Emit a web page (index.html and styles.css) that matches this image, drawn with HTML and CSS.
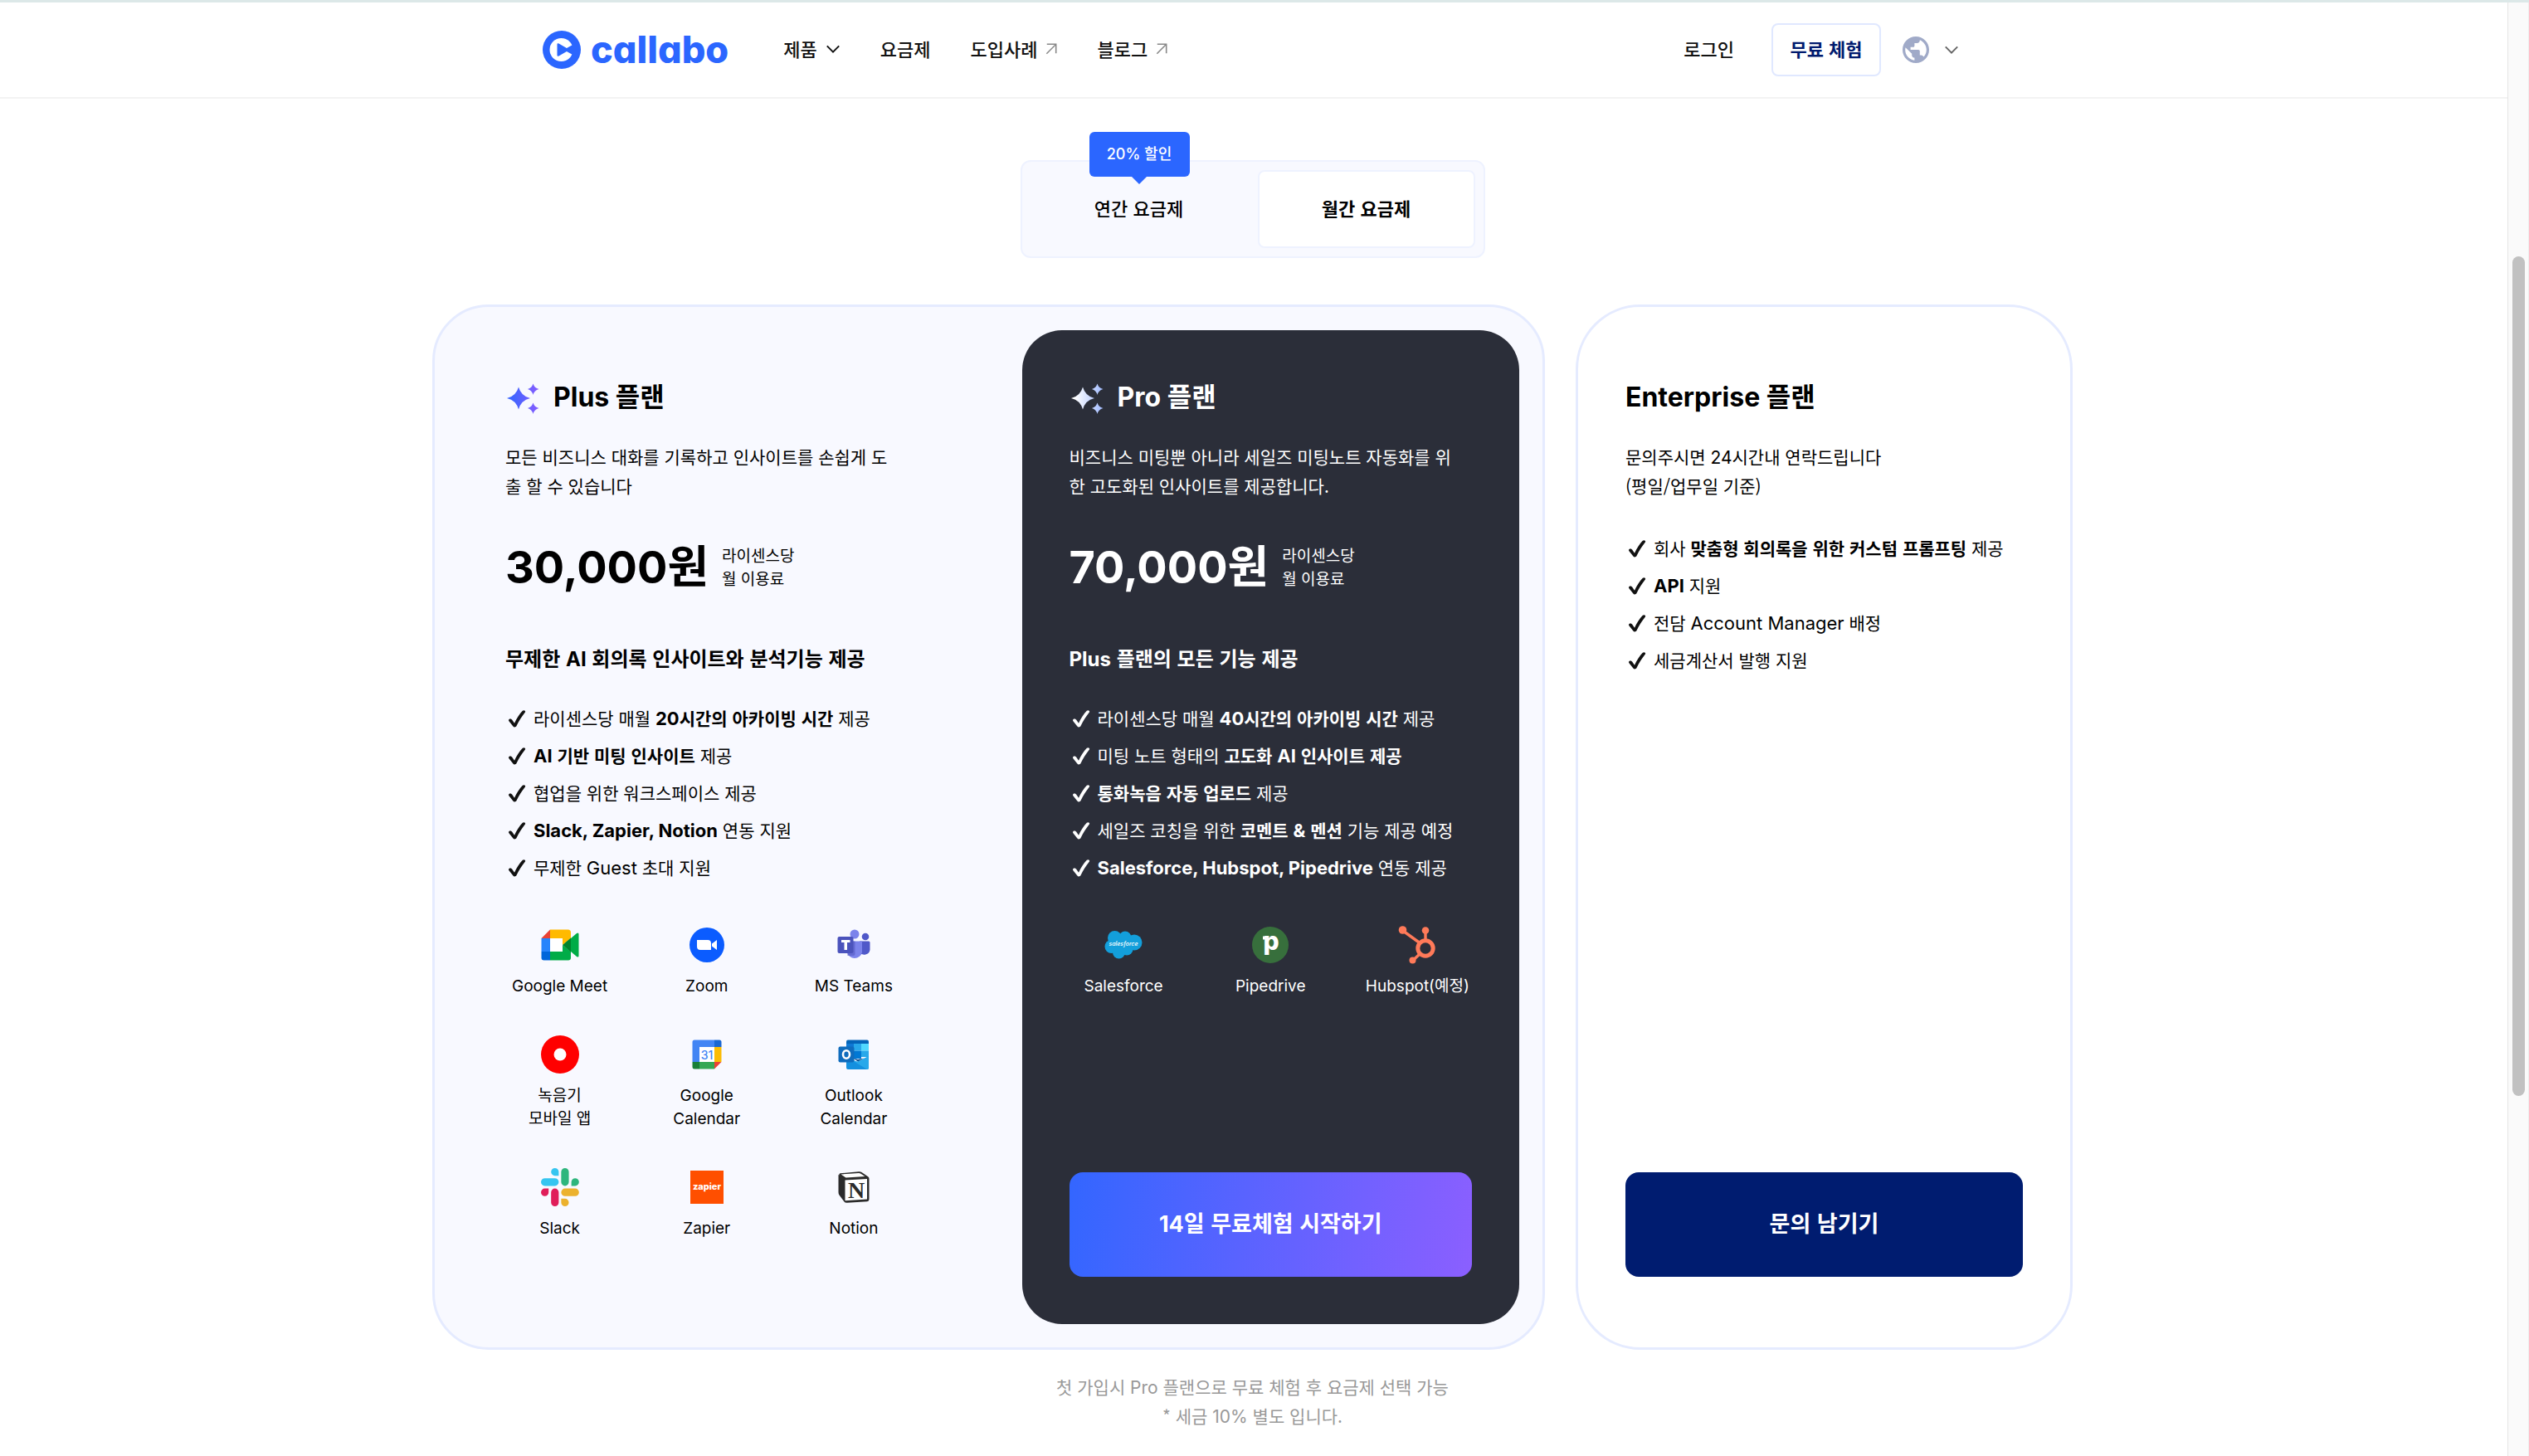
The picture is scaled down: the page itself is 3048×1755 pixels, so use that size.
FILE: index.html
```html
<!DOCTYPE html>
<html lang="ko">
<head>
<meta charset="utf-8">
<meta name="viewport" content="width=device-width, initial-scale=1">
<title>callabo 요금제</title>
<link rel="stylesheet" href="styles.css">
</head>
<body>
<svg class="defs" aria-hidden="true">
  <defs>
    <linearGradient id="spark-light" gradientUnits="userSpaceOnUse" x1="2" y1="0" x2="42" y2="0"><stop offset="0.1" stop-color="#ffffff"/><stop offset="1" stop-color="#9db8ff"/></linearGradient>
    <linearGradient id="spark-main" gradientUnits="userSpaceOnUse" x1="2" y1="0" x2="42" y2="0"><stop offset="0.1" stop-color="#3a66ff"/><stop offset="1" stop-color="#8a5cff"/></linearGradient>
    <symbol id="sparkle" viewBox="0 0 46 46">
      <path d="M16 10.500Q19 21.500 30 24Q19 26.500 16 37.500Q13 26.500 2 24Q13 21.500 16 10.500Z"/>
      <path d="M33.500 6.500Q35 11.500 40.500 13Q35 14.500 33.500 20Q32 14.500 27 13Q32 11.500 33.500 6.500Z"/>
      <path d="M33.500 29.500Q35 34.500 40.500 36Q35 37.500 33.500 43Q32 37.500 27 36Q32 34.500 33.500 29.500Z"/>
    </symbol>
    <symbol id="check" viewBox="0 0 28 28">
      <path d="M4 16.200C4 14.200 7 13.800 8.100 15.600L11 19.800C13.500 14.200 17.300 8.500 20.800 4.800C22.300 3.500 25 4.500 23.900 6.600C19.800 11.800 16.200 17.300 13.500 23C12.600 24.800 10.200 25 9.200 23.300L4.600 17.500Q4 16.800 4 16.200Z" fill="currentColor"/>
    </symbol>
    <symbol id="chevron" viewBox="0 0 20 12"><path d="M2 2L10 10L18 2" fill="none" stroke="currentColor" stroke-width="2.200"/></symbol>
    <symbol id="arrow" viewBox="0 0 16 16"><path d="M2 1.500H14.500V14M14.500 1.500L1.500 14.500" fill="none" stroke="currentColor" stroke-width="1.800"/></symbol>
  </defs>
</svg>
<div class="window">
  <div class="page">
    <header class="site-header">
      <div class="header-inner">
        <a class="logo" href="#" aria-label="callabo">
          <svg class="logo-mark" viewBox="0 0 46 46" aria-hidden="true">
            <circle cx="23" cy="23" r="23" fill="#2b66ff"/>
            <circle cx="22.500" cy="23" r="14" fill="#fff"/>
            <path d="M17.500 16.500Q17.500 14.500 19.500 15.500L29 21L38 16V30L29 25L19.500 30.500Q17.500 31.500 17.500 29.500Z" fill="#2b66ff"/>
          </svg>
          <span class="logo-text">callabo</span>
        </a>
        <nav class="nav">
          <a href="#">제품 <svg class="chevron" aria-hidden="true"><use href="#chevron"/></svg></a>
          <a href="#">요금제</a>
          <a href="#">도입사례 <svg class="arrow" aria-hidden="true"><use href="#arrow"/></svg></a>
          <a href="#">블로그 <svg class="arrow" aria-hidden="true"><use href="#arrow"/></svg></a>
        </nav>
        <div class="account">
          <a class="login" href="#">로그인</a>
          <button class="trial" type="button">무료 체험</button>
          <button class="language" type="button" aria-label="언어">
            <svg class="globe" viewBox="2 2 20 20" aria-hidden="true"><path fill="#a0aac8" d="M12 2C6.480 2 2 6.480 2 12s4.480 10 10 10 10-4.480 10-10S17.520 2 12 2zm-1 17.930c-3.950-.49-7-3.850-7-7.930 0-.62.080-1.210.210-1.790L9 15v1c0 1.100.900 2 2 2v1.930zm6.900-2.540c-.26-.81-1-1.390-1.900-1.390h-1v-3c0-.55-.45-1-1-1H8v-2h2c.55 0 1-.45 1-1V7h2c1.100 0 2-.9 2-2v-.41c2.930 1.190 5 4.060 5 7.410 0 2.080-.8 3.970-2.100 5.390z"/></svg>
            <svg class="chevron muted" aria-hidden="true"><use href="#chevron"/></svg>
          </button>
        </div>
      </div>
    </header>

    <main class="pricing">
      <div class="billing">
        <button class="billing-tab" type="button">연간 요금제<span class="badge">20% 할인</span></button>
        <button class="billing-tab active" type="button">월간 요금제</button>
      </div>

      <div class="plans">
        <div class="plan-group">
          <section class="plan plus">
            <h2><svg class="spark" fill="url(#spark-main)" aria-hidden="true"><use href="#sparkle"/></svg>Plus 플랜</h2>
            <p class="desc">모든 비즈니스 대화를 기록하고 인사이트를 손쉽게 도<br>출 할 수 있습니다</p>
            <div class="price"><span class="amount">30,000원</span><span class="unit">라이센스당<br>월 이용료</span></div>
            <h3>무제한 <span class="latin">AI</span> 회의록 인사이트와 분석기능 제공</h3>
            <ul class="features">
              <li><svg class="check" aria-hidden="true"><use href="#check"/></svg><span>라이센스당 매월 <strong><span class="latin">20</span>시간의 아카이빙 시간</strong> 제공</span></li>
              <li><svg class="check" aria-hidden="true"><use href="#check"/></svg><span><strong><span class="latin">AI</span> 기반 미팅 인사이트</strong> 제공</span></li>
              <li><svg class="check" aria-hidden="true"><use href="#check"/></svg><span>협업을 위한 워크스페이스 제공</span></li>
              <li><svg class="check" aria-hidden="true"><use href="#check"/></svg><span><strong class="latin">Slack, Zapier, Notion</strong> 연동 지원</span></li>
              <li><svg class="check" aria-hidden="true"><use href="#check"/></svg><span>무제한 <span class="latin">Guest</span> 초대 지원</span></li>
            </ul>
            <ul class="apps">
              <li>
                <svg viewBox="0 0 46 46" aria-hidden="true">
                  <path d="M0.500 15L11 4.500V15Z" fill="#ea4335"/>
                  <path d="M11 4.500H32.500Q36 4.500 36 8V15L26 23V15H11Z" fill="#ffba00"/>
                  <path d="M0.500 15H11V31H0.500Z" fill="#2684fc"/>
                  <path d="M0.500 31H11V41.500H3.500Q0.500 41.500 0.500 38.500Z" fill="#0066da"/>
                  <path d="M11 31H26V23L36 31V38.500Q36 41.500 33 41.500H11Z" fill="#00ac47"/>
                  <path d="M11 15H26V31H11Z" fill="#fff"/>
                  <path d="M36 15L43 9Q45.500 7.500 45.500 10V36Q45.500 38.500 43 37L36 31Z" fill="#00ac47"/>
                  <path d="M26 23L36 14.500V31.500Z" fill="#00832d"/>
                </svg>Google Meet
              </li>
              <li>
                <svg viewBox="0 0 46 46" aria-hidden="true">
                  <circle cx="23" cy="23" r="21" fill="#0b5cff"/>
                  <path d="M11 17H24Q28 17 28 21V29H15Q11 29 11 25ZM29 21.500L35 17V29L29 24.500Z" fill="#fff"/>
                </svg>Zoom
              </li>
              <li>
                <svg viewBox="0 0 46 46" aria-hidden="true">
                  <circle cx="24" cy="10" r="5.500" fill="#7b83eb"/><circle cx="37" cy="13" r="4.300" fill="#5059c9"/>
                  <path d="M30 18.500H41Q42.500 18.500 42.500 20V29A7 7 0 0 1 30 32Z" fill="#5059c9"/>
                  <path d="M15 18.500H33V32A9.300 9.300 0 0 1 15 32Z" fill="#7b83eb"/>
                  <path d="M15 18.500H24.500V34Q24.500 36 22 36H15.500Z" fill="#5b60c8" opacity="0.700"/>
                  <rect x="3.500" y="13" width="19" height="20" rx="2" fill="#4b53bc"/>
                  <path d="M8 17H18.500V20H15V29H11.500V20H8Z" fill="#fff"/>
                </svg>MS Teams
              </li>
              <li>
                <svg viewBox="0 0 46 46" aria-hidden="true"><circle cx="23" cy="23" r="23" fill="#f00"/><circle cx="23" cy="23" r="7.500" fill="#fff"/></svg>녹음기<br>모바일 앱
              </li>
              <li>
                <svg viewBox="0 0 46 46" aria-hidden="true">
                  <path d="M5.500 8Q5.500 5.500 8 5.500H32V14H14V32H5.500Z" fill="#4285f4"/>
                  <path d="M32 5.500H38Q40.500 5.500 40.500 8V14H32Z" fill="#1967d2"/>
                  <path d="M32 14H40.500V32H32Z" fill="#fbbc04"/>
                  <path d="M14 32H32V40.500H14Z" fill="#34a853"/>
                  <path d="M5.500 32H14V40.500H8Q5.500 40.500 5.500 38Z" fill="#188038"/>
                  <path d="M32 32H40.500L32 40.500Z" fill="#ea4335"/>
                  <path d="M14 14H32V32H14Z" fill="#fff"/>
                  <text x="23" y="28.500" class="glyph cal">31</text>
                </svg>Google<br>Calendar
              </li>
              <li>
                <svg viewBox="0 0 46 46" aria-hidden="true">
                  <path d="M14 7.500Q14 5.500 16 5.500H39Q41 5.500 41 7.500V10H14Z" fill="#0364b8"/>
                  <path d="M14 10H23V18.500H14Z" fill="#0f78d4"/><path d="M23 10H32V18.500H23Z" fill="#28a8ea"/><path d="M32 10H41V18.500H32Z" fill="#50d9ff"/>
                  <path d="M14 18.500H23V28H14Z" fill="#0364b8"/><path d="M23 18.500H32V28H23Z" fill="#0078d4"/><path d="M32 18.500H41V26H32Z" fill="#28a8ea"/>
                  <path d="M14 24L27.500 33L41 25V39Q41 41 39 41H16Q14 41 14 39Z" fill="#1490df"/>
                  <path d="M41 25V39Q41 41 39 41L21 30L27.500 31.500Z" fill="#28a8ea"/>
                  <path d="M22 27.500L28 31.500L35 27.500L28 29Z" fill="#0a4f91"/>
                  <rect x="4.500" y="13.500" width="19" height="19" rx="2" fill="#0f6cbd"/>
                  <ellipse cx="14" cy="23" rx="4" ry="4.700" fill="none" stroke="#fff" stroke-width="2.600"/>
                </svg>Outlook<br>Calendar
              </li>
              <li>
                <svg viewBox="0 0 54 54" aria-hidden="true">
                  <path d="M19.700 0a5.400 5.400 0 0 0 0 10.800h5.400V5.400A5.400 5.400 0 0 0 19.700 0m0 14.400H5.400a5.400 5.400 0 0 0 0 10.800h14.300a5.400 5.400 0 0 0 0-10.800" fill="#36c5f0"/>
                  <path d="M53.800 19.800a5.400 5.400 0 0 0-10.800 0v5.400h5.400a5.400 5.400 0 0 0 5.400-5.400m-14.400 0V5.400a5.400 5.400 0 0 0-10.800 0v14.400a5.400 5.400 0 0 0 10.800 0" fill="#2eb67d"/>
                  <path d="M34 54a5.400 5.400 0 0 0 0-10.800h-5.400v5.400A5.400 5.400 0 0 0 34 54m0-14.400h14.400a5.400 5.400 0 0 0 0-10.800H34a5.400 5.400 0 0 0 0 10.800" fill="#ecb22e"/>
                  <path d="M0 34.200a5.400 5.400 0 0 0 10.800 0v-5.400H5.400A5.400 5.400 0 0 0 0 34.200m14.300 0v14.400a5.400 5.400 0 0 0 10.800 0V34.200a5.400 5.400 0 0 0-10.800 0" fill="#e01e5a"/>
                </svg>Slack
              </li>
              <li>
                <svg viewBox="0 0 46 46" aria-hidden="true"><rect x="3" y="3" width="40" height="40" fill="#ff4f00"/><text x="23" y="26" class="glyph zap">zapier</text></svg>Zapier
              </li>
              <li>
                <svg viewBox="0 0 46 46" aria-hidden="true">
                  <path d="M6 8.500Q4.500 7.500 6.500 6.200L29 4.200Q31 4 32.500 5L40.500 10.500Q41.500 11.200 41.500 13V37.500Q41.500 40 39 40.200L15 41.800Q12.500 42 11.500 40.500L5.500 32.500Q4.500 31 4.500 29V8Z" fill="#2b2b2b"/>
                  <path d="M7.500 7.500L29 6Q30.500 6 31.500 6.700L36.500 10L13.500 11.500Z" fill="#fff"/>
                  <path d="M12.500 14.500L39 13V37.500L12.500 39.300Z" fill="#fff"/>
                  <text x="26" y="35.500" class="glyph notion">N</text>
                </svg>Notion
              </li>
            </ul>
          </section>

          <section class="plan pro">
            <h2><svg class="spark" fill="url(#spark-light)" aria-hidden="true"><use href="#sparkle"/></svg>Pro 플랜</h2>
            <p class="desc">비즈니스 미팅뿐 아니라 세일즈 미팅노트 자동화를 위<br>한 고도화된 인사이트를 제공합니다.</p>
            <div class="price"><span class="amount">70,000원</span><span class="unit">라이센스당<br>월 이용료</span></div>
            <h3><span class="latin">Plus</span> 플랜의 모든 기능 제공</h3>
            <ul class="features">
              <li><svg class="check" aria-hidden="true"><use href="#check"/></svg><span>라이센스당 매월 <strong><span class="latin">40</span>시간의 아카이빙 시간</strong> 제공</span></li>
              <li><svg class="check" aria-hidden="true"><use href="#check"/></svg><span>미팅 노트 형태의 <strong>고도화 <span class="latin">AI</span> 인사이트 제공</strong></span></li>
              <li><svg class="check" aria-hidden="true"><use href="#check"/></svg><span><strong>통화녹음 자동 업로드</strong> 제공</span></li>
              <li><svg class="check" aria-hidden="true"><use href="#check"/></svg><span>세일즈 코칭을 위한 <strong>코멘트 <span class="latin">&amp;</span> 멘션</strong> 기능 제공 예정</span></li>
              <li><svg class="check" aria-hidden="true"><use href="#check"/></svg><span><strong class="latin">Salesforce, Hubspot, Pipedrive</strong> 연동 제공</span></li>
            </ul>
            <ul class="apps">
              <li>
                <svg viewBox="0 0 46 46" aria-hidden="true">
                  <g fill="#139fdb"><circle cx="12.500" cy="14.500" r="8.500"/><circle cx="25" cy="14" r="7.500"/><circle cx="36" cy="20" r="9.500"/><circle cx="8.500" cy="25" r="8"/><circle cx="17.500" cy="32" r="7.500"/><circle cx="27" cy="28" r="7.500"/><path d="M10 14H36V28H10Z"/></g>
                  <text x="23" y="23.500" class="glyph sales">salesforce</text>
                </svg>Salesforce
              </li>
              <li>
                <svg viewBox="0 0 46 46" aria-hidden="true"><circle cx="23" cy="23" r="22" fill="#376f3c"/><path d="M14 12.500H20V16.500H14Z" fill="#fff"/><text x="24" y="29" class="glyph pipe">p</text></svg>Pipedrive
              </li>
              <li>
                <svg viewBox="0 0 46 46" aria-hidden="true">
                  <g fill="none" stroke="#ff7a59"><circle cx="33" cy="27" r="9.200" stroke-width="5"/><path d="M33 6V17M6 6L26 20.500M18 41.500L26 34" stroke-width="3.400"/></g>
                  <g fill="#ff7a59"><circle cx="33" cy="5.500" r="4.300"/><circle cx="5.500" cy="5" r="4.800"/><circle cx="17.500" cy="41.500" r="4"/></g>
                </svg><span class="nowrap">Hubspot(예정)</span>
              </li>
            </ul>
            <button class="cta gradient" type="button"><span class="latin">14</span>일 무료체험 시작하기</button>
          </section>
        </div>

        <section class="plan enterprise">
          <h2>Enterprise 플랜</h2>
          <p class="desc">문의주시면 <span class="latin">24</span>시간내 연락드립니다<br>(평일/업무일 기준)</p>
          <ul class="features">
            <li><svg class="check" aria-hidden="true"><use href="#check"/></svg><span>회사 <strong>맞춤형 회의록을 위한 커스텀 프롬프팅</strong> 제공</span></li>
            <li><svg class="check" aria-hidden="true"><use href="#check"/></svg><span><strong class="latin">API</strong> 지원</span></li>
            <li><svg class="check" aria-hidden="true"><use href="#check"/></svg><span>전담 <span class="latin">Account Manager</span> 배정</span></li>
            <li><svg class="check" aria-hidden="true"><use href="#check"/></svg><span>세금계산서 발행 지원</span></li>
          </ul>
          <button class="cta navy" type="button">문의 남기기</button>
        </section>
      </div>

      <p class="note">첫 가입시 <span class="latin">Pro</span> 플랜으로 무료 체험 후 요금제 선택 가능<br>* 세금 <span class="latin">10%</span> 별도 입니다.</p>
    </main>
  </div>
  <div class="scroll-track" aria-hidden="true"><div class="scroll-thumb"></div></div>
</div>
</body>
</html>
```
FILE: styles.css
```css
* { box-sizing: border-box; }

body {
  margin: 0;
  background: #fff;
  color: #000;
  font-family: "Noto Sans CJK KR", "Noto Sans", sans-serif;
  font-size: 22px;
  line-height: 35px;
}

h2, h3, p, ul { margin: 0; padding: 0; }
ul { list-style: none; }
a { color: inherit; text-decoration: none; }
button { font: inherit; color: inherit; border: 0; padding: 0; background: none; cursor: pointer; }
svg { flex: none; display: block; overflow: visible; }

.defs { position: absolute; width: 0; height: 0; }
.latin { font-family: Inter, "Noto Sans CJK KR", sans-serif; line-height: 1; }
.nowrap { white-space: nowrap; }

.window {
  display: flex;
  min-height: 100vh;
  border-top: 3px solid #dce8e8;
}
.page { flex: 1; min-width: 0; }

/* Header */
.site-header { border-bottom: 2px solid #f3f3f3; }
.header-inner {
  display: flex;
  align-items: center;
  max-width: 1714px;
  height: 114px;
  margin: 0 auto;
  padding-right: 7px;
  font-weight: 500;
  color: #111;
}
.logo { display: flex; align-items: center; gap: 12px; color: #2b66ff; }
.logo-mark { width: 46px; height: 46px; }
.logo-text {
  font-family: Inter, sans-serif;
  font-size: 45px;
  font-weight: 800;
  line-height: 48px;
  font-feature-settings: "cv11";
}
.nav { display: flex; gap: 48px; margin-left: 66px; }
.nav a { display: flex; align-items: center; gap: 10px; padding-bottom: 3px; }
.chevron { width: 18px; height: 12px; }
.chevron.muted { color: #666; }
.arrow { width: 14px; height: 14px; color: #888; }
.account { display: flex; align-items: center; margin-left: auto; }
.login { padding-bottom: 3px; }
.trial {
  width: 132px;
  height: 64px;
  margin-left: 45px;
  padding-bottom: 3px;
  border: 2px solid #e0e8ff;
  border-radius: 8px;
  color: #001a6e;
  font-weight: 700;
}
.language { display: flex; align-items: center; gap: 18px; margin-left: 26px; }
.globe { width: 32px; height: 32px; }

/* Billing period switch */
.pricing { padding: 74px 27px 28px 24px; }
.billing {
  display: grid;
  grid-template-columns: 1fr 1fr;
  gap: 12px;
  max-width: 560px;
  margin: 0 auto;
  padding: 10px;
  border: 2px solid #eef2ff;
  border-radius: 12px;
  background: #f8f9ff;
}
.billing-tab {
  position: relative;
  height: 94px;
  padding-bottom: 4px;
  border: 2px solid transparent;
  border-radius: 8px;
  font-weight: 500;
}
.billing-tab.active { border-color: #eef2ff; background: #fff; font-weight: 700; }
.badge {
  position: absolute;
  left: 50%;
  bottom: 84px;
  width: 121px;
  margin-left: -60px;
  border-radius: 6px;
  background: #2b66ff;
  color: #fff;
  font-family: Inter, "Noto Sans CJK KR", sans-serif;
  font-size: 18px;
  font-weight: 500;
  line-height: 54px;
}
.badge::after {
  content: "";
  position: absolute;
  left: 50%;
  top: 100%;
  margin-left: -9px;
  border: 9px solid transparent;
  border-top-color: #2b66ff;
  border-bottom: 0;
}

/* Plans */
.plans {
  display: grid;
  grid-template-columns: 1341fr 599fr;
  gap: 37px;
  max-width: 1977px;
  margin: 56px auto 0;
}
.plan-group {
  display: grid;
  grid-template-columns: 1fr 1fr;
  gap: 80px;
  padding: 28px;
  border: 3px solid #e5ebff;
  border-radius: 68px;
  background: #f8f9ff;
}
.plan { display: flex; flex-direction: column; padding: 58px 57px 57px; }
.plan.plus { padding-bottom: 101px; }
.plan.pro { border-radius: 48px; background: #2b2e39; color: #fff; }
.plan.enterprise { padding: 86px 57px 85px; border: 3px solid #e5ebff; border-radius: 78px; }

.plan h2 {
  display: flex;
  align-items: center;
  gap: 12px;
  font-family: Inter, "Noto Sans CJK KR", sans-serif;
  font-size: 32px;
  font-weight: 700;
  line-height: 46px;
}
.spark { width: 46px; height: 46px; }
.desc { margin-top: 31px; font-size: 21px; white-space: nowrap; }
.price { display: flex; align-items: center; gap: 16px; margin-top: 50px; }
.amount {
  font-family: Inter, "Noto Sans CJK KR", sans-serif;
  font-size: 54px;
  font-weight: 700;
  line-height: 62px;
}
.unit { padding-bottom: 2px; font-size: 19px; line-height: 28px; }
.plan h3 { margin-top: 60px; font-size: 24px; font-weight: 700; line-height: 36px; }

.features { margin-top: 32px; font-size: 21px; }
.enterprise .features { margin-top: 35px; }
.features li { display: flex; align-items: center; gap: 6px; height: 45px; white-space: nowrap; }
.features strong { font-weight: 700; }
.features .latin { font-size: 22px; }
.check { width: 28px; height: 28px; color: #111; }
.pro .check { color: #fff; }

.apps {
  display: grid;
  grid-template-columns: repeat(3, 1fr);
  gap: 45px 46px;
  margin-top: 48px;
  font-family: Inter, "Noto Sans CJK KR", sans-serif;
  font-size: 19px;
  line-height: 28px;
  text-align: center;
}
.apps svg { width: 46px; height: 46px; margin: 0 auto 13px; }

.glyph { font-family: Inter, sans-serif; text-anchor: middle; fill: #fff; }
.cal { font-size: 14px; font-weight: 500; fill: #4285f4; }
.zap { font-size: 11px; font-weight: 800; }
.notion { font-family: "Liberation Serif", serif; font-size: 28px; font-weight: 700; fill: #2b2b2b; }
.sales { font-size: 7px; font-style: italic; font-weight: 500; }
.pipe { font-size: 30px; font-weight: 800; }

.cta {
  width: 100%;
  margin-top: auto;
  padding-bottom: 4px;
  border-radius: 16px;
  color: #fff;
  font-size: 27px;
  font-weight: 700;
  line-height: 122px;
}
.cta.gradient { background: linear-gradient(98deg, #3366ff, #8b5fff); }
.cta.navy { background: #001c70; }

.note { margin-top: 27px; color: #999; font-size: 21px; text-align: center; }

/* Scroll bar */
.scroll-track {
  width: 26px;
  padding: 306px 4px 0 5px;
  border-left: 1px solid #e6e6e6;
  border-right: 1px solid #ededed;
  background: #fafafa;
}
.scroll-thumb { height: 1012px; border-radius: 8px; background: #c1c1c1; }
```
